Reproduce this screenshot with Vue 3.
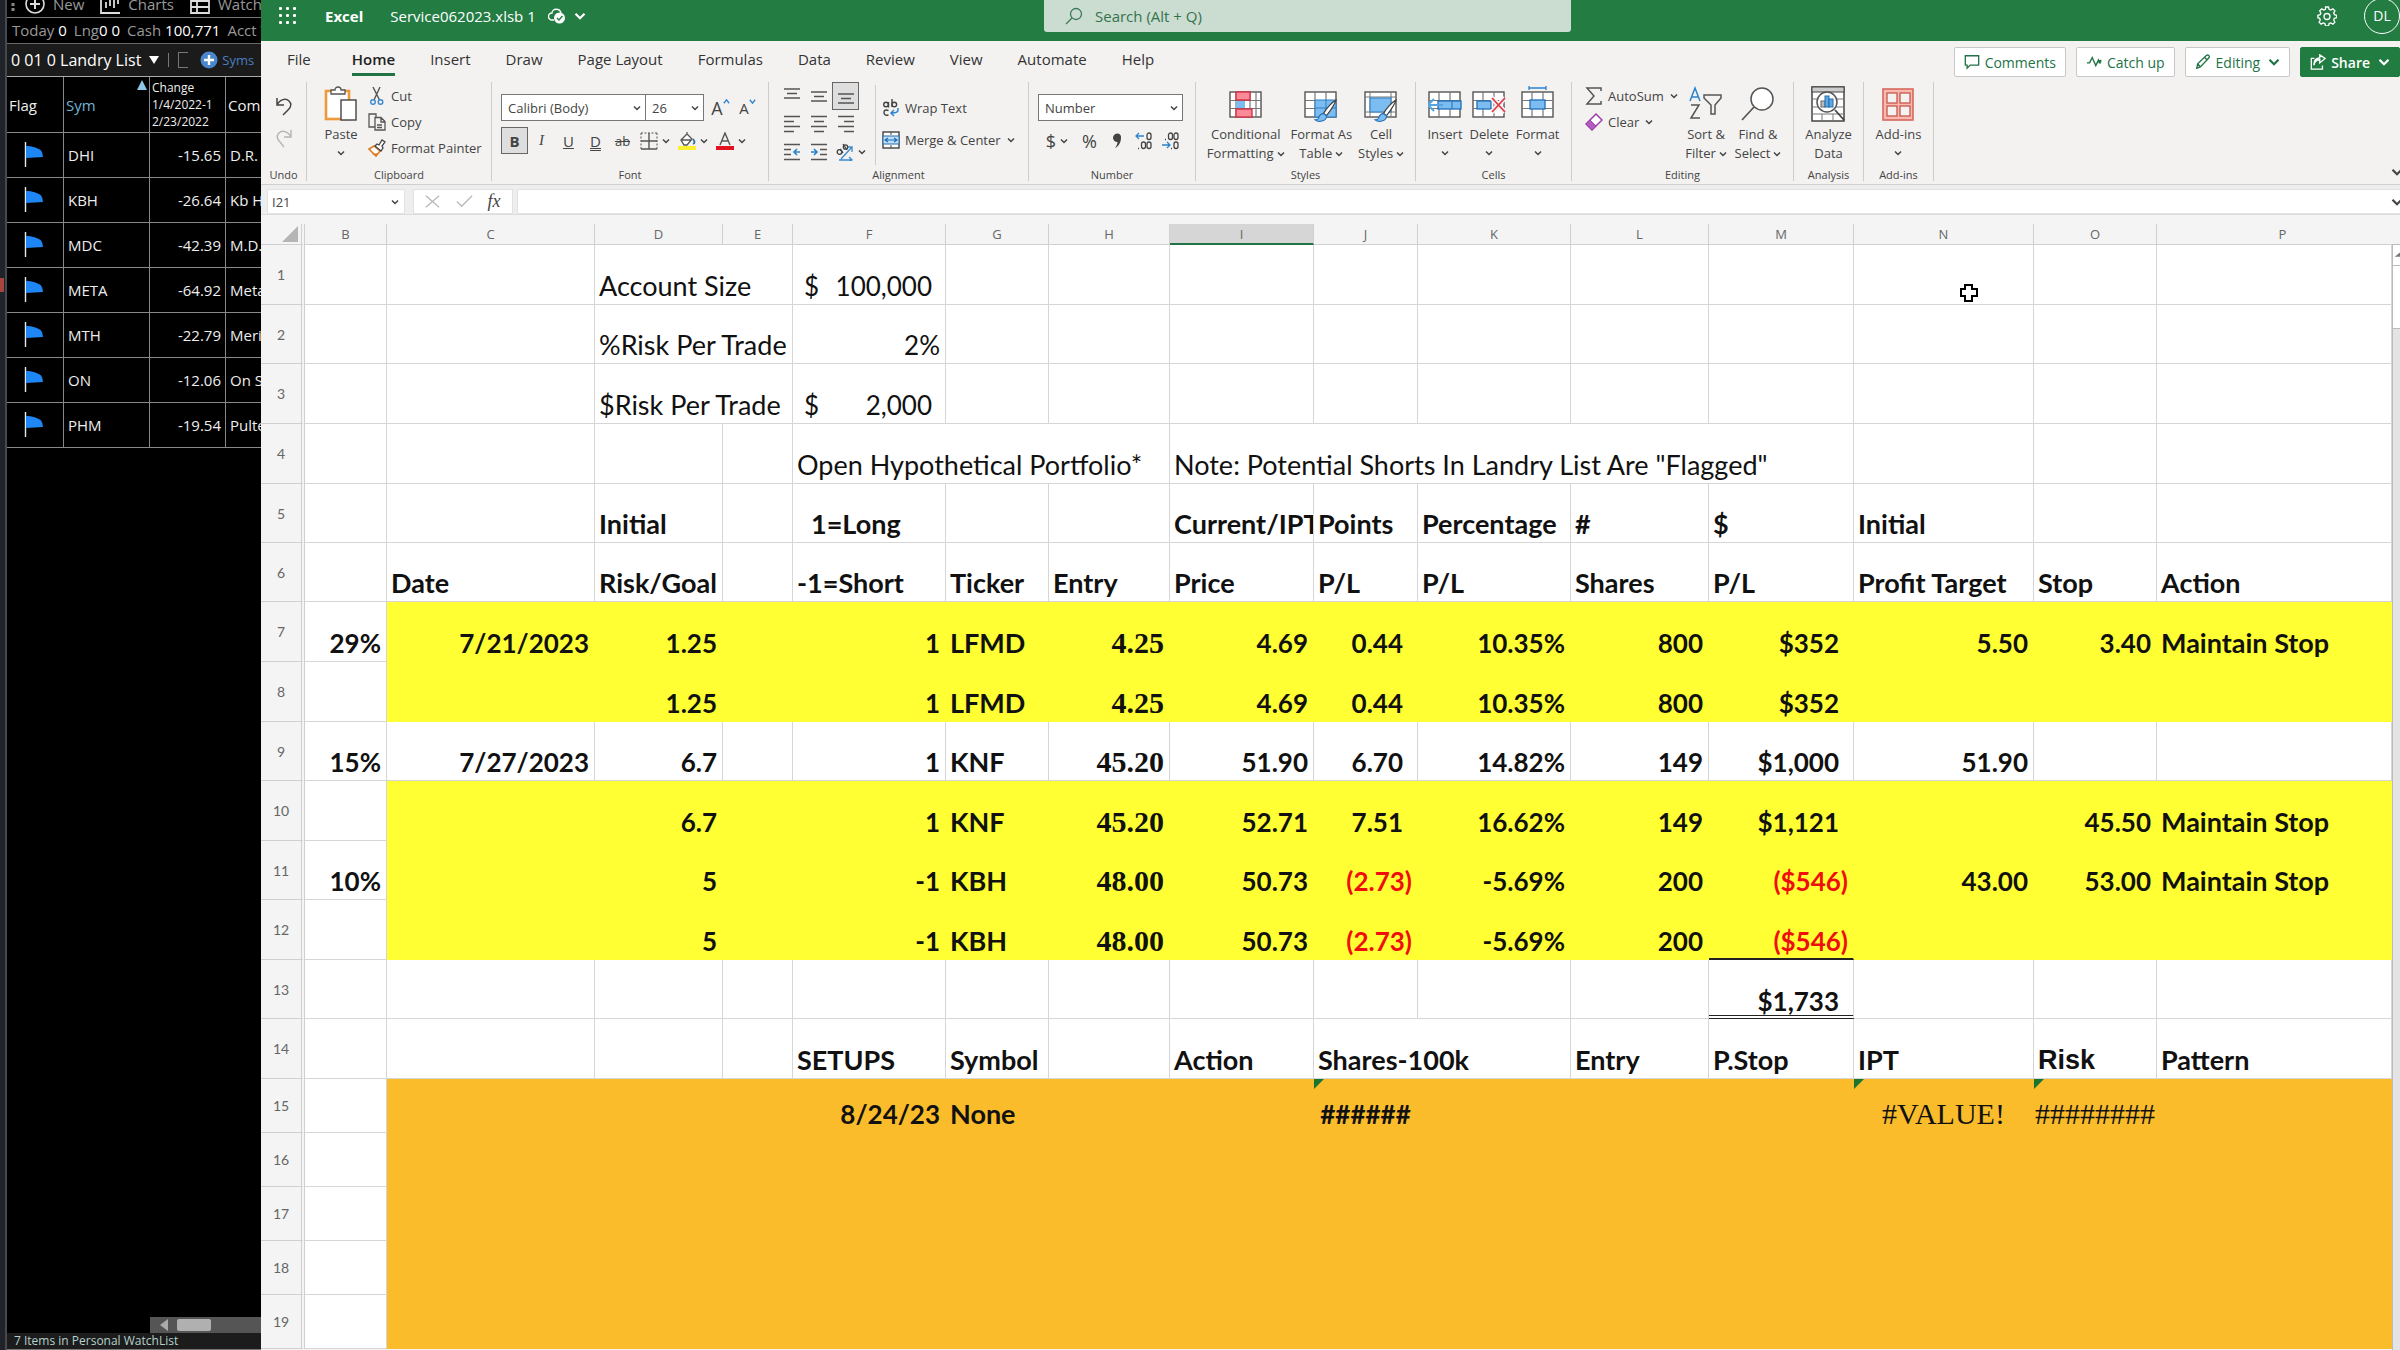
<template>
  <div class="screen">
    <!-- Icon definitions -->
    <svg class="defs" aria-hidden="true">
      <symbol id="chev" viewBox="0 0 8 8"><path d="M1 2.500 4 5.500 7 2.500" fill="none" stroke="currentColor" stroke-width="1.500" /></symbol>
      <symbol id="sheet-grid" viewBox="0 0 34 30">
        <rect x="1" y="2" width="31" height="25" fill="#fff" stroke="#555" stroke-width="1.400" />
        <path d="M1 10.500H32M1 18.500H32M11 2V27M22 2V27" stroke="#777" stroke-width="1.200" />
      </symbol>
      <symbol id="brush" viewBox="0 0 24 24">
        <path d="M22 2C18 4 12 11 10 15l3 2C16 13 21 6 22 2Z" fill="#fff" stroke="#444" stroke-width="1.200" />
        <path d="M10 15c-3 0-4 2-4.500 4-.5 1.500-2 2-3.500 2 3 2.500 11 2 11-4Z" fill="#7dbcf0" stroke="#1e6fb8" />
      </symbol>
      <symbol id="flag" viewBox="0 0 20 28">
        <path d="M1.500 1V26" stroke="#e8e8e8" stroke-width="1.400" />
        <path d="M2 5C8 5 14 7 17 9.500Q19 12 19 16L2 17Z" fill="#1e86f5" />
      </symbol>
    </svg>

    <div class="edge"><i></i></div>

    <!-- Watch list panel -->
    <aside class="watch">
      <div class="watch-tools">
        <svg class="w-dots" viewBox="0 0 4 16"><path d="M2 1v3M2 7v3M2 12v3" stroke="#888" stroke-width="3" /></svg>
        <svg class="w-icon" viewBox="0 0 20 20"><circle cx="10" cy="10" r="9" fill="none" stroke="#ddd" stroke-width="1.600" /><path d="M10 5V15M5 10H15" stroke="#ddd" stroke-width="2" /></svg>
        <a href="#">New</a><b></b>
        <svg class="w-icon" viewBox="0 0 20 20"><path d="M1 1V19H20M6 14V8M10 12V5M14 14V6M18 10V3" fill="none" stroke="#ddd" stroke-width="1.800" /></svg>
        <a href="#">Charts</a><b></b>
        <svg class="w-icon" viewBox="0 0 20 20"><path d="M1 1H19V19H1ZM1 7H19M1 13H19M7 7V19" fill="none" stroke="#ddd" stroke-width="1.800" /></svg>
        <a href="#">Watch</a>
      </div>
      <div class="watch-stats">
        <span>Today <em>0</em></span><span>Lng<em>0 0</em></span><span>Cash <em>100,771</em></span><span>Acct V</span>
      </div>
      <div class="watch-title">
        <button class="list-pick">0 01 0 Landry List<svg viewBox="0 0 10 8"><path d="M0 0H10L5 8Z" fill="#fff" /></svg></button>
        <i class="bar"></i><i class="bracket"></i>
        <button class="syms"><svg viewBox="0 0 18 18"><circle cx="9" cy="9" r="8.500" fill="#4a86cc" /><path d="M9 4V14M4 9H14" stroke="#fff" stroke-width="2.400" /></svg>Syms</button>
      </div>
      <table class="watch-table">
        <colgroup><col class="w-flag" /><col class="w-sym" /><col class="w-change" /><col /></colgroup>
        <thead>
          <tr>
            <th>Flag</th>
            <th class="sorted">Sym<svg viewBox="0 0 10 10"><path d="M5 0 10 10H0Z" fill="#8ec8e6" /></svg></th>
            <th class="change">Change<br />1/4/2022-1<br />2/23/2022</th>
            <th>Comp</th>
          </tr>
        </thead>
        <tbody>
          <tr v-for="item in watchItems" :key="item.sym">
            <td class="flag"><svg><use href="#flag" /></svg></td>
            <td class="sym">{{ item.sym }}</td>
            <td class="num">{{ item.change }}</td>
            <td class="company">{{ item.company }}</td>
          </tr>
        </tbody>
      </table>
      <div class="watch-scroll">
        <svg viewBox="0 0 8 12"><path d="M8 0V12L0 6Z" fill="#aaa" /></svg><i></i>
      </div>
      <div class="watch-status">7 Items in Personal WatchList</div>
    </aside>

    <!-- Excel window -->
    <main class="excel">
      <header class="topbar">
        <svg class="waffle" viewBox="0 0 18 18"><g fill="#fff"><rect v-for="n in 9" :key="n" :x="((n - 1) % 3) * 7" :y="Math.floor((n - 1) / 3) * 7" width="3" height="3" rx="1" /></g></svg>
        <strong>Excel</strong>
        <span class="doc">Service062023.xlsb 1</span>
        <svg class="cloud" viewBox="0 0 18 18"><path d="M6 13H4A3.500 3.500 0 0 1 4 6C4 1 12 1 13 6" fill="none" stroke="#fff" stroke-width="1.300" /><circle cx="11.500" cy="11" r="5.500" fill="#fff" /><path d="M9 11l2 2 3.500-4" fill="none" stroke="#237d43" stroke-width="1.400" /></svg>
        <svg class="chev-l"><use href="#chev" /></svg>
        <label class="search">
          <svg viewBox="0 0 18 18"><circle cx="11" cy="7" r="5.500" fill="none" stroke="#3c7a55" stroke-width="1.300" /><path d="M7 11 1 17" stroke="#3c7a55" stroke-width="1.300" /></svg>
          <input type="text" placeholder="Search (Alt + Q)" aria-label="Search" />
        </label>
        <button class="gear" aria-label="Settings">
          <svg viewBox="0 0 20 20" fill="none" stroke="#fff"><path d="M8.500 1h3l.6 2.300 1.700.8 2.100-1.200 2 2-1.200 2.200.7 1.600 2.300.6v2.400l-2.300.6-.7 1.700 1.200 2.100-2 2-2.100-1.200-1.700.7-.6 2.400h-3l-.6-2.400-1.700-.7-2.100 1.200-2-2 1.200-2.100-.7-1.700L.9 11.700V9.300l2.300-.6.7-1.600-1.200-2.200 2-2 2.100 1.200 1.700-.8Z" stroke-width="1.300" /><circle cx="10" cy="10.500" r="3" stroke-width="1.300" /></svg>
        </button>
        <button class="avatar">DL</button>
      </header>

      <nav class="tabs">
        <a v-for="tab in tabs" :key="tab" href="#" :class="{ active: tab === 'Home', file: tab === 'File' }">{{ tab }}</a>
        <div class="actions">
          <button><svg viewBox="0 0 18 18"><path d="M1.500 2H16.500V12.500H7L3.500 16V12.500H1.500Z" fill="none" stroke="currentColor" stroke-width="1.500" /></svg>Comments</button>
          <button><svg viewBox="0 0 18 18"><path d="M1 10H4L7 4l4 9 3-6 1 3h2" fill="none" stroke="currentColor" stroke-width="1.600" /><circle cx="16" cy="8" r="1.500" fill="currentColor" /></svg>Catch up</button>
          <button><svg viewBox="0 0 18 18"><path d="M2 16l1-5L13 1.500q2-1 3 1 .5 1-.5 2L6 14.500ZM11 4l3 3M3 11l3 3.500" fill="none" stroke="currentColor" stroke-width="1.500" /></svg>Editing<svg class="chev-l"><use href="#chev" /></svg></button>
          <button class="share"><svg viewBox="0 0 18 18"><path d="M5 5H1.500V17H14V13M4.500 12.500C5 8 7 6.500 11 6.500V10l6-5-6-4V4.500C7 4.500 4 7 4.500 12.500Z" fill="none" stroke="currentColor" stroke-width="1.500" /></svg>Share<svg class="chev-l"><use href="#chev" /></svg></button>
        </div>
      </nav>

      <div class="ribbon">
        <section class="group g-undo">
          <div class="body undo">
            <button aria-label="Undo"><svg viewBox="0 0 18 20"><path d="M2 2V9H9M2 9C5 3 11 2 14 5c3 3 2 6-1 9L8 19" fill="none" stroke="#444" stroke-width="1.500" /></svg></button>
            <button aria-label="Redo"><svg viewBox="0 0 18 20"><path d="M16 2V9H9M16 9C13 3 7 2 4 5c-3 3-2 6 1 9l4 5" fill="none" stroke="#b5b5b5" stroke-width="1.400" /></svg></button>
          </div>
          <h2>Undo</h2>
        </section>

        <section class="group g-clip">
          <div class="body">
            <button class="big paste">
              <svg viewBox="0 0 34 36"><rect x="2" y="5" width="23" height="28" fill="#fff" stroke="#ec9a3c" stroke-width="2.600" /><path d="M7 8V4h4c0-4 6-4 6 0h4v4Z" fill="#fff" stroke="#555" stroke-width="1.300" /><rect x="17" y="14" width="15" height="20" fill="#fff" stroke="#444" stroke-width="1.400" /></svg>
              <span>Paste</span><svg class="chev"><use href="#chev" /></svg>
            </button>
            <div class="stack">
              <button class="small"><svg viewBox="0 0 18 18"><path d="M5 0 11.500 13M12 0 6 13" stroke="#555" stroke-width="1.400" /><g fill="none" stroke="#3a8ad0" stroke-width="1.400"><circle cx="5" cy="15" r="2.300" /><circle cx="12.500" cy="15" r="2.300" /></g></svg>Cut</button>
              <button class="small"><svg viewBox="0 0 18 18"><path d="M7 14H1V1H8V4M7 4.500h6l4 4V17H7ZM13 5V9h4M9 12h5M9 14.500h5" fill="none" stroke="#555" stroke-width="1.300" /></svg>Copy</button>
              <button class="small"><svg viewBox="0 0 18 18"><path d="M1 10 6 7l6 5-4 5Z" fill="#fff" stroke="#e07b28" stroke-width="1.600" /><path d="M4 15l4 2 2-3Z" fill="#e07b28" /><path d="M7 7l2-2 2 1 3-5 3 2-3 4 1 2-2 3Z" fill="#fff" stroke="#444" stroke-width="1.300" /></svg>Format Painter</button>
            </div>
          </div>
          <h2>Clipboard</h2>
        </section>

        <section class="group g-font">
          <div class="body rows">
            <div class="line">
              <div class="combo family"><select aria-label="Font"><option>Calibri (Body)</option></select><svg class="chev"><use href="#chev" /></svg></div>
              <div class="combo size"><select aria-label="Font size"><option>26</option></select><svg class="chev"><use href="#chev" /></svg></div>
              <button class="glyph grow">A<svg viewBox="0 0 8 8"><path d="M1 6 4 2 7 6" fill="none" stroke="#2b84cf" stroke-width="1.500" /></svg></button>
              <button class="glyph grow less">A<svg viewBox="0 0 8 8"><path d="M1 2 4 6 7 2" fill="none" stroke="#2b84cf" stroke-width="1.500" /></svg></button>
            </div>
            <div class="line">
              <button class="glyph on"><b>B</b></button>
              <button class="glyph"><i class="serif">I</i></button>
              <button class="glyph"><u>U</u></button>
              <button class="glyph dbl"><u>D</u></button>
              <button class="glyph strike"><s>ab</s></button>
              <button class="drop" aria-label="Borders"><svg viewBox="0 0 18 18"><path d="M1 1H17M1 1V17M17 1V17" stroke="#555" stroke-dasharray="2 1.500" /><path d="M1 17H17M9 1V17M1 9H17" stroke="#555" stroke-width="1.400" /></svg><svg class="chev"><use href="#chev" /></svg></button>
              <button class="drop" aria-label="Fill colour"><svg viewBox="0 0 18 18"><path d="M3 8 9 2l5 5-5 6H6ZM9 2V0M3 8h10" fill="#fff" stroke="#555" stroke-width="1.300" /><path d="M15 7q3 4 0 5" stroke="#2b6cb0" stroke-width="1.800" fill="none" /><rect y="14" width="18" height="4" fill="#fcf032" /></svg><svg class="chev"><use href="#chev" /></svg></button>
              <button class="drop" aria-label="Font colour"><svg viewBox="0 0 18 18"><path d="M4 13 9 1l5 12M6 9h6" fill="none" stroke="#555" stroke-width="1.400" /><rect y="14" width="18" height="4" fill="#e2131f" /></svg><svg class="chev"><use href="#chev" /></svg></button>
            </div>
          </div>
          <h2>Font</h2>
        </section>

        <section class="group g-align">
          <div class="body">
            <div class="align-grid">
              <button v-for="icon in alignIcons" :key="icon.name" :aria-label="icon.name" :class="{ on: icon.on }">
                <svg viewBox="0 0 18 18"><path :d="icon.d" stroke="#555" stroke-width="1.500" /><path v-if="icon.arrow" :d="icon.arrow" fill="none" stroke="#2b84cf" stroke-width="1.700" /></svg>
              </button>
              <button class="orient" aria-label="Orientation"><svg viewBox="0 0 18 18"><path d="M3 17H16M5 16 16 4M11 4h5v5M13 14l3 3-3 2" fill="none" stroke="#3a8ad0" stroke-width="1.300" /><g fill="none" stroke="#444" stroke-width="1.300"><circle cx="3.500" cy="9" r="2.300" /><path d="M4 6l3 4M7 1l4 6" /><circle cx="9.500" cy="4" r="2.200" /></g></svg><svg class="chev"><use href="#chev" /></svg></button>
            </div>
            <div class="stack wide">
              <button class="small"><svg viewBox="0 0 18 18"><g fill="none" stroke="#444" stroke-width="1.400"><circle cx="4" cy="5.500" r="2.300" /><path d="M6.500 3V8.500M10 0V8" /><circle cx="12.300" cy="5.500" r="2.300" /><path d="M6.500 11.500Q2 10 2 13.500T6.500 16" /></g><path d="M16 9v2q0 3-6 3M12 11l-3 3 3 3" fill="none" stroke="#2b84cf" stroke-width="1.500" /></svg>Wrap Text</button>
              <button class="small"><svg viewBox="0 0 18 18"><rect x="1" y="1" width="16" height="16" fill="#fff" stroke="#444" stroke-width="1.400" /><rect x="1" y="5" width="16" height="8" fill="#bfe0f8" stroke="#2b6ca8" /><path d="M3 9H15M6 7 3 9l3 2M12 7l3 2-3 2" fill="none" stroke="#1f6fb5" stroke-width="1.200" /><path d="M9 1V4M9 14V17" stroke="#444" /></svg>Merge &amp; Center<svg class="chev"><use href="#chev" /></svg></button>
            </div>
          </div>
          <h2>Alignment</h2>
        </section>

        <section class="group g-number">
          <div class="body rows">
            <div class="line">
              <div class="combo format"><select aria-label="Number format"><option>Number</option></select><svg class="chev"><use href="#chev" /></svg></div>
            </div>
            <div class="line">
              <button class="drop money">$<svg class="chev"><use href="#chev" /></svg></button>
              <button class="glyph money">%</button>
              <button class="glyph comma" aria-label="Comma style"><svg viewBox="0 0 18 18"><path d="M9 1.500a3.500 3.500 0 0 1 4 4C13 10 11 14 7 16c1.500-2 2.500-4 2.500-6A4 4 0 0 1 9 1.500Z" fill="#444" /></svg></button>
              <button class="glyph" aria-label="Increase decimal"><svg viewBox="0 0 18 18" fill="none" stroke="#444" stroke-width="1.300"><rect x="12" y="1" width="4" height="6.500" rx="2" /><rect x="6.500" y="10" width="4" height="6.500" rx="2" /><rect x="12" y="10" width="4" height="6.500" rx="2" /><path d="M3 16.500h1" /><path d="M9 4H1M4 1 1 4l3 3" stroke="#2b84cf" /></svg></button>
              <button class="glyph" aria-label="Decrease decimal"><svg viewBox="0 0 18 18" fill="none" stroke="#444" stroke-width="1.300"><rect x="6.500" y="1" width="4" height="6.500" rx="2" /><rect x="12" y="1" width="4" height="6.500" rx="2" /><rect x="12" y="10" width="4" height="6.500" rx="2" /><path d="M3 7.500h1M9 16.500h1" /><path d="M0 13H8M5 10l3 3-3 3" stroke="#2b84cf" /></svg></button>
            </div>
          </div>
          <h2>Number</h2>
        </section>

        <section class="group g-styles">
          <div class="body">
            <button class="big">
              <svg viewBox="0 0 34 36"><rect x="1" y="6" width="31" height="25" fill="#fff" stroke="#555" stroke-width="1.400" /><path d="M1 14.500H32M1 22.500H32M7 6V31M21 6V31M27 6V31" stroke="#777" stroke-width="1.200" /><g stroke="#d62a40" fill="#f98b98" stroke-width="1.300"><rect x="7" y="6" width="14" height="8" /><rect x="7" y="23" width="16" height="8" /></g><rect x="7" y="15" width="9" height="7" fill="#7dbcf0" /></svg>
              <span>Conditional<br />Formatting<svg class="chev"><use href="#chev" /></svg></span>
            </button>
            <button class="big">
              <svg viewBox="0 0 34 36"><use href="#sheet-grid" y="4" width="34" height="30" /><rect x="11" y="14" width="21" height="17" fill="#7dbcf0" stroke="#2b7cc4" /><path d="M11 22H32M22 14V31" stroke="#2b7cc4" /><use href="#brush" x="9" y="12" width="25" height="25" /></svg>
              <span>Format As<br />Table<svg class="chev"><use href="#chev" /></svg></span>
            </button>
            <button class="big">
              <svg viewBox="0 0 34 36"><rect x="1" y="6" width="31" height="25" fill="#fff" stroke="#555" stroke-width="1.400" /><path d="M1 11H32M1 26H32M6 6V31M27 6V31" stroke="#777" /><rect x="6" y="12" width="21" height="14" fill="#7dbcf0" stroke="#2b7cc4" /><use href="#brush" x="9" y="12" width="25" height="25" /></svg>
              <span>Cell<br />Styles<svg class="chev"><use href="#chev" /></svg></span>
            </button>
          </div>
          <h2>Styles</h2>
        </section>

        <section class="group g-cells">
          <div class="body">
            <button class="big">
              <svg viewBox="0 0 34 36"><use href="#sheet-grid" y="4" width="34" height="30" /><rect x="10" y="15" width="23" height="8" fill="#7dbcf0" stroke="#1e6fb8" stroke-width="1.300" /><path d="M24 15V23" stroke="#1e6fb8" /><path d="M15 19H0M6 13 0 19l6 6" fill="none" stroke="#56a5e2" stroke-width="2" /></svg>
              <span>Insert</span><svg class="chev"><use href="#chev" /></svg>
            </button>
            <button class="big">
              <svg viewBox="0 0 34 36"><use href="#sheet-grid" y="4" width="34" height="30" /><rect x="5" y="15" width="14" height="8" fill="#7dbcf0" stroke="#1e6fb8" stroke-width="1.300" /><path d="M20 12 33 26M33 12 20 26" stroke="#f3f2f1" stroke-width="5" /><path d="M20 12 33 26M33 12 20 26" stroke="#e03a4c" stroke-width="1.800" /></svg>
              <span>Delete</span><svg class="chev"><use href="#chev" /></svg>
            </button>
            <button class="big">
              <svg viewBox="0 0 34 36"><use href="#sheet-grid" y="4" width="34" height="30" /><rect x="9" y="14" width="15" height="9" fill="#7dbcf0" stroke="#1e6fb8" stroke-width="1.300" /><path d="M8 2H25M8 0V4M25 0V4" stroke="#2b84cf" stroke-width="1.300" /></svg>
              <span>Format</span><svg class="chev"><use href="#chev" /></svg>
            </button>
          </div>
          <h2>Cells</h2>
        </section>

        <section class="group g-edit">
          <div class="body">
            <div class="stack edit">
              <button class="small"><svg viewBox="0 0 18 18"><path d="M16 4V1H2l7 8-7 8H16V14" fill="none" stroke="#555" stroke-width="1.500" /></svg>AutoSum<svg class="chev"><use href="#chev" /></svg></button>
              <button class="small"><svg viewBox="0 0 18 18"><path d="M11 1 17 7 7 17 1 11Z" fill="#fff" stroke="#9b3fa8" stroke-width="1.500" /><path d="M5 7 11 13 7 17 1 11Z" fill="#b45cc0" stroke="#9b3fa8" /></svg>Clear<svg class="chev"><use href="#chev" /></svg></button>
            </div>
            <button class="big narrow">
              <svg viewBox="0 0 34 36"><path d="M1 15 6 2l5 13M3 11h6" fill="none" stroke="#2b84cf" stroke-width="1.500" /><path d="M2 19h8L2 32h9M15 9H32V12L26 19V28H22V19L15 12Z" fill="none" stroke="#555" stroke-width="1.500" /></svg>
              <span>Sort &amp;<br />Filter<svg class="chev"><use href="#chev" /></svg></span>
            </button>
            <button class="big narrow">
              <svg viewBox="0 0 34 36"><circle cx="21" cy="13" r="11" fill="#fff" stroke="#555" stroke-width="1.500" /><path d="M13 21 1 34" stroke="#555" stroke-width="1.700" /></svg>
              <span>Find &amp;<br />Select<svg class="chev"><use href="#chev" /></svg></span>
            </button>
          </div>
          <h2>Editing</h2>
        </section>

        <section class="group g-one">
          <div class="body">
            <button class="big">
              <svg viewBox="0 0 34 36"><rect x="1" y="1" width="32" height="34" fill="#fff" stroke="#444" stroke-width="1.500" /><rect x="1" y="1" width="32" height="5" fill="#ccc" stroke="#444" /><path d="M1 13H33M1 21H33M1 28H33M11 28V35M22 28V35" stroke="#777" /><circle cx="16" cy="16" r="10" fill="#fff" stroke="#555" stroke-width="1.500" /><path d="M24 24 33 34" stroke="#444" stroke-width="1.800" /><rect x="10" y="15" width="4" height="6" fill="#bbb" stroke="#666" /><rect x="14" y="10" width="4" height="11" fill="#5aa9e6" stroke="#2b6ca8" /><rect x="18" y="13" width="4" height="8" fill="#5aa9e6" stroke="#2b6ca8" /></svg>
              <span>Analyze<br />Data</span>
            </button>
          </div>
          <h2>Analysis</h2>
        </section>

        <section class="group g-one">
          <div class="body">
            <button class="big">
              <svg viewBox="0 0 34 36"><rect x="2" y="3" width="30" height="31" fill="#f7b9b0" stroke="#d8685c" stroke-width="1.600" /><g fill="#f3f2f1" stroke="#c9574b" stroke-width="1.300"><rect x="6" y="7" width="10" height="10" /><rect x="19" y="7" width="10" height="10" /><rect x="6" y="20" width="10" height="10" /><rect x="19" y="20" width="10" height="10" /></g></svg>
              <span>Add-ins</span><svg class="chev"><use href="#chev" /></svg>
            </button>
          </div>
          <h2>Add-ins</h2>
        </section>
        <button class="collapse" aria-label="Ribbon options"><svg class="chev-l"><use href="#chev" /></svg></button>
      </div>

      <div class="formula">
        <div class="namebox"><input type="text" value="I21" aria-label="Name box" /><svg class="chev"><use href="#chev" /></svg></div>
        <div class="fx">
          <svg viewBox="0 0 18 18"><path d="M2 3 16 15M16 3 2 15" stroke="#b9b9b9" stroke-width="1.400" /></svg>
          <svg viewBox="0 0 18 18"><path d="M1 9 6 14 17 3" fill="none" stroke="#b9b9b9" stroke-width="1.400" /></svg>
          <i>fx</i>
        </div>
        <div class="entry"><input type="text" aria-label="Formula" /><svg class="chev-l"><use href="#chev" /></svg></div>
      </div>

      <div class="sheet">
        <table class="grid">
          <colgroup>
            <col class="c-head" />
            <col v-for="col in columns" :key="col" :class="'c-' + col" />
          </colgroup>
          <thead>
            <tr>
              <th class="corner"><svg viewBox="0 0 16 16"><path d="M16 0V16H0Z" fill="#b5b5b5" /></svg></th>
              <th v-for="col in columns" :key="col" :class="{ selected: col === 'I' }">{{ col }}</th>
            </tr>
          </thead>
          <tbody>
            <tr v-for="row in rows" :key="row.n" :class="[row.fill, rowSize(row.n)]">
              <th>{{ row.n }}</th>
              <td v-for="cell in layOut(row)" :key="cell.col" :colspan="cell.span" :class="[cell.cls, { gutter: cell.col === 'B' }]">
                <div v-if="cell.money" class="accounting"><span>$</span><span>{{ cell.text }}</span></div>
                <template v-else>{{ cell.text }}</template>
              </td>
            </tr>
          </tbody>
        </table>
        <div class="vscroll">
          <button aria-label="Scroll up"><svg viewBox="0 0 8 8"><path d="M8 1V6H2Z" fill="#777" /></svg></button>
          <i></i>
        </div>
      </div>
    </main>

    <svg class="pointer" viewBox="0 0 20 20"><path d="M6 2H13V6H18V13H13V18H6V13H2V6H6Z" fill="#fff" stroke="#000" stroke-width="2" /></svg>
  </div>
</template>

<script setup>
const watchItems = [
  { sym: 'DHI', change: '-15.65', company: 'D.R.' },
  { sym: 'KBH', change: '-26.64', company: 'Kb H' },
  { sym: 'MDC', change: '-42.39', company: 'M.D.' },
  { sym: 'META', change: '-64.92', company: 'Meta' },
  { sym: 'MTH', change: '-22.79', company: 'Meri' },
  { sym: 'ON', change: '-12.06', company: 'On S' },
  { sym: 'PHM', change: '-19.54', company: 'Pulte' }
];

const tabs = ['File', 'Home', 'Insert', 'Draw', 'Page Layout', 'Formulas', 'Data', 'Review', 'View', 'Automate', 'Help'];

const alignIcons = [
  { name: 'Top align', d: 'M1 2H17M4 6.500H14M1 11H17' },
  { name: 'Middle align', d: 'M1 5H17M4 9.500H14M1 14H17' },
  { name: 'Bottom align', d: 'M1 7H17M4 11.500H14M1 16H17', on: true },
  { name: 'Align left', d: 'M1 1.500H17M1 6.500H11M1 11.500H17M1 16.500H11' },
  { name: 'Center', d: 'M1 1.500H17M4 6.500H14M1 11.500H17M4 16.500H14' },
  { name: 'Align right', d: 'M1 1.500H17M7 6.500H17M1 11.500H17M7 16.500H17' },
  { name: 'Decrease indent', d: 'M1 1.500H17M1 6.500H8M1 11.500H8M1 16.500H17', arrow: 'M17 9H11M14 6l-3 3 3 3' },
  { name: 'Increase indent', d: 'M1 1.500H17M10 6.500H17M10 11.500H17M1 16.500H17', arrow: 'M1 9H7M4 6l3 3-3 3' }
];

const columns = 'BCDEFGHIJKLMNOP'.split('');

const left = (text, span = 1) => ({ text, span, cls: 'left' });
const plain = (text, span = 1) => ({ text, span, cls: 'left plain' });
const right = (text) => ({ text, cls: 'right' });
const inset = (text) => ({ text, cls: 'right inset' });
const red = (text) => ({ text, cls: 'right red' });
const serif = (text) => ({ text, cls: 'right serif' });

const rows = [
  { n: 1, cells: { D: plain('Account Size', 2), F: { text: '100,000', money: true, cls: 'plain right' } } },
  { n: 2, cells: { D: plain('%Risk Per Trade', 2), F: { text: '2%', cls: 'plain right' } } },
  { n: 3, cells: { D: plain('$Risk Per Trade', 2), F: { text: '2,000', money: true, cls: 'plain right' } } },
  { n: 4, cells: { F: plain('Open Hypothetical Portfolio*', 3), I: plain('Note: Potential Shorts In Landry List Are "Flagged"', 5) } },
  { n: 5, cells: { D: left('Initial'), F: { text: '1=Long', cls: 'left indent' }, I: left('Current/IPT'), J: left('Points'), K: left('Percentage'), L: left('#'), M: left('$'), N: left('Initial') } },
  { n: 6, cells: { C: left('Date'), D: left('Risk/Goal'), F: left('-1=Short'), G: left('Ticker'), H: left('Entry'), I: left('Price'), J: left('P/L'), K: left('P/L'), L: left('Shares'), M: left('P/L'), N: left('Profit Target'), O: left('Stop'), P: left('Action') } },
  { n: 7, fill: 'yellow', cells: { B: right('29%'), C: right('7/21/2023'), D: right('1.25'), F: right('1'), G: left('LFMD'), H: serif('4.25'), I: right('4.69'), J: inset('0.44'), K: right('10.35%'), L: right('800'), M: inset('$352'), N: right('5.50'), O: right('3.40'), P: left('Maintain Stop') } },
  { n: 8, fill: 'yellow', cells: { D: right('1.25'), F: right('1'), G: left('LFMD'), H: serif('4.25'), I: right('4.69'), J: inset('0.44'), K: right('10.35%'), L: right('800'), M: inset('$352') } },
  { n: 9, cells: { B: right('15%'), C: right('7/27/2023'), D: right('6.7'), F: right('1'), G: left('KNF'), H: serif('45.20'), I: right('51.90'), J: inset('6.70'), K: right('14.82%'), L: right('149'), M: inset('$1,000'), N: right('51.90') } },
  { n: 10, fill: 'yellow', cells: { D: right('6.7'), F: right('1'), G: left('KNF'), H: serif('45.20'), I: right('52.71'), J: inset('7.51'), K: right('16.62%'), L: right('149'), M: inset('$1,121'), O: right('45.50'), P: left('Maintain Stop') } },
  { n: 11, fill: 'yellow', cells: { B: right('10%'), D: right('5'), F: right('-1'), G: left('KBH'), H: serif('48.00'), I: right('50.73'), J: red('(2.73)'), K: right('-5.69%'), L: right('200'), M: red('($546)'), N: right('43.00'), O: right('53.00'), P: left('Maintain Stop') } },
  { n: 12, fill: 'yellow', cells: { D: right('5'), F: right('-1'), G: left('KBH'), H: serif('48.00'), I: right('50.73'), J: red('(2.73)'), K: right('-5.69%'), L: right('200'), M: { text: '($546)', cls: 'right red ruled' } } },
  { n: 13, cells: { M: { text: '$1,733', cls: 'right inset total' } } },
  { n: 14, cells: { F: left('SETUPS'), G: left('Symbol'), I: left('Action'), J: left('Shares-100k', 2), L: left('Entry'), M: left('P.Stop'), N: left('IPT'), O: { text: 'Risk', cls: 'left arial' }, P: left('Pattern') } },
  { n: 15, fill: 'orange', cells: { F: right('8/24/23'), G: left('None'), J: { text: '######', cls: 'center error' }, N: { text: '#VALUE!', cls: 'center error serif thin' }, O: { text: '########', cls: 'center error serif thin' } } },
  { n: 16, fill: 'orange', cells: {} },
  { n: 17, fill: 'orange', cells: {} },
  { n: 18, fill: 'orange', cells: {} },
  { n: 19, fill: 'orange', cells: {} }
];

const rowSize = (n) => {
  if (n > 14) return 'short';
  return [2, 5, 6, 9, 11, 13].includes(n) ? 'medium' : 'tall';
};

// Turn the sparse cells of a row into the list of cells, skipping the spanned ones
const layOut = (row) => {
  const out = [];
  let i = 0;
  while (i < columns.length) {
    const cell = { col: columns[i], text: '', span: 1, ...row.cells[columns[i]] };
    out.push(cell);
    i += cell.span;
  }
  return out;
};
</script>

<style>
body {
  margin: 0;
  background: #000;
}
</style>

<style scoped>
.screen {
  display: flex;
  position: relative;
  height: 100vh;
  overflow: hidden;
  font-family: "Open Sans", "Noto Sans", sans-serif;
  font-size: 13px;
  color: #444;
}

* {
  box-sizing: border-box;
}

button,
input,
select {
  font: inherit;
  color: inherit;
  background: none;
  border: 0;
  padding: 0;
  margin: 0;
}

button {
  display: flex;
  align-items: center;
  justify-content: center;
  white-space: nowrap;
}

a {
  color: inherit;
  text-decoration: none;
}

svg {
  flex: none;
}

.defs {
  position: absolute;
  width: 0;
  height: 0;
}

.chev {
  width: 8px;
  height: 8px;
}

.chev-l {
  width: 12px;
  height: 12px;
}

/* Left strip */
.edge {
  width: 7px;
  flex: none;
  background: #20232a;
  border-right: 2px solid #45484d;
  padding-top: 278px;
}

.edge i {
  display: block;
  width: 4px;
  height: 14px;
  background: #a8443f;
}

/* Watch list */
.watch {
  width: 254px;
  flex: none;
  display: flex;
  flex-direction: column;
  overflow: hidden;
  background: #000;
  color: #eee;
  font-size: 15px;
  white-space: nowrap;
}

.watch-tools {
  display: flex;
  align-items: center;
  gap: 8px;
  height: 18px;
  padding: 0 0 9px 4px;
  border-bottom: 1px solid #777;
  color: #999;
}

.watch-tools b {
  width: 1px;
  height: 16px;
  background: #666;
}

.w-dots {
  width: 4px;
  height: 16px;
  margin-right: 2px;
}

.w-icon {
  width: 20px;
  height: 20px;
}

.watch-stats {
  display: flex;
  align-items: center;
  gap: 7px;
  height: 26px;
  padding-left: 5px;
  padding-bottom: 2px;
  border-bottom: 1px solid #666;
  color: #999;
}

.watch-stats em {
  font-style: normal;
  color: #fff;
}

.watch-title {
  display: flex;
  align-items: center;
  height: 33px;
  padding-left: 4px;
  background: #1b1b1b;
  border-bottom: 1px solid #aaa;
  font-size: 16px;
}

.list-pick {
  color: #fff;
}

.list-pick svg {
  width: 10px;
  height: 8px;
  margin-left: 8px;
}

.bar {
  width: 1px;
  height: 14px;
  margin: 0 9px;
  background: #777;
}

.bracket {
  width: 10px;
  height: 16px;
  border: 1px solid #777;
  border-right: 0;
  margin-right: 12px;
}

.syms {
  gap: 4px;
  font-size: 13px;
  color: #4a7ec0;
}

.syms svg {
  width: 18px;
  height: 18px;
}

.watch-table {
  table-layout: fixed;
  width: 100%;
  border-spacing: 0;
}

.w-flag {
  width: 57px;
}

.w-sym {
  width: 86px;
}

.w-change {
  width: 76px;
}

.watch-table th,
.watch-table td {
  height: 45px;
  padding: 0 4px;
  border-right: 1px solid #888;
  border-bottom: 1px solid #888;
  text-align: left;
  font-weight: 400;
  overflow: hidden;
}

.watch-table th:last-child,
.watch-table td:last-child {
  border-right: 0;
  padding-right: 0;
}

.watch-table th {
  height: 56px;
  padding: 0 2px;
  position: relative;
}

.watch-table .change {
  font-size: 12px;
  line-height: 17px;
}

.watch-table .sorted {
  color: #6fb4d4;
}

.sorted svg {
  position: absolute;
  top: 3px;
  right: 2px;
  width: 10px;
  height: 10px;
}

.watch-table .flag {
  padding-left: 17px;
}

.flag svg {
  display: block;
  width: 20px;
  height: 28px;
}

.watch-table .num {
  text-align: right;
}

.watch-scroll {
  display: flex;
  align-items: center;
  gap: 9px;
  height: 16px;
  margin-top: auto;
  margin-left: 143px;
  padding-left: 10px;
  background: #555;
}

.watch-scroll svg {
  width: 8px;
  height: 12px;
}

.watch-scroll i {
  width: 34px;
  height: 12px;
  border-radius: 2px;
  background: #b0b0b0;
}

.watch-status {
  height: 17px;
  padding-left: 7px;
  background: #1c1c1c;
  border-bottom: 1px solid #777;
  font-size: 12px;
  line-height: 16px;
  color: #b4d0cc;
}

/* Excel */
.excel {
  flex: 1;
  min-width: 0;
  display: flex;
  flex-direction: column;
  background: #f3f2f1;
}

.topbar {
  display: flex;
  align-items: center;
  position: relative;
  height: 41px;
  flex: none;
  padding: 0 0 10px 18px;
  overflow: hidden;
  background: #237d43;
  color: #fff;
  font-size: 15px;
}

.waffle {
  width: 18px;
  height: 18px;
  margin-right: 28px;
}

.doc {
  margin: 0 12px 0 27px;
}

.cloud {
  width: 18px;
  height: 18px;
  margin-right: 8px;
}

.search {
  position: absolute;
  left: 783px;
  top: 0;
  display: flex;
  align-items: center;
  gap: 12px;
  width: 527px;
  height: 32px;
  padding-left: 21px;
  background: #cbdcd1;
  border-radius: 0 0 3px 3px;
}

.search svg {
  width: 18px;
  height: 18px;
}

.search input {
  flex: 1;
  font-size: 15px;
}

.search input::placeholder {
  color: #33744d;
  opacity: 1;
}

.gear {
  margin-left: auto;
}

.gear svg {
  width: 20px;
  height: 20px;
}

.avatar {
  flex: none;
  width: 36px;
  height: 36px;
  margin-left: 27px;
  border: 1px solid #fff;
  border-radius: 50%;
  font-size: 14px;
}

.tabs {
  display: flex;
  gap: 35px;
  height: 41px;
  flex: none;
  padding-left: 26px;
  font-size: 15px;
  color: #333;
}

.tabs a {
  height: 35px;
  line-height: 37px;
  white-space: nowrap;
}

.tabs .file {
  margin-right: 6px;
}

.tabs .active {
  border-bottom: 3px solid #217346;
  color: #222;
  font-weight: 600;
}

.actions {
  display: flex;
  gap: 10px;
  margin: 6px 0 0 auto;
}

.actions button {
  gap: 5px;
  height: 30px;
  padding: 0 9px;
  border: 1px solid #c8c8c8;
  border-radius: 2px;
  background: #fff;
  color: #217346;
  font-size: 14px;
}

.actions svg {
  width: 16px;
  height: 16px;
}

.actions .chev-l {
  width: 12px;
  height: 12px;
  margin-left: 3px;
}

.actions .share {
  border-color: #217c41;
  background: #217c41;
  color: #fff;
  font-weight: 600;
}

.ribbon {
  display: flex;
  height: 103px;
  flex: none;
  padding-bottom: 3px;
  border-bottom: 1px solid #cfcfcf;
}

.group {
  display: flex;
  flex-direction: column;
  flex: none;
  border-right: 1px solid #ccc;
}

.group h2 {
  margin: 0;
  font-size: 11px;
  font-weight: 400;
  line-height: 13px;
  text-align: center;
}

.body {
  display: flex;
  height: 86px;
}

.g-undo {
  width: 46px;
}

.g-clip {
  width: 185px;
}

.g-font {
  width: 277px;
}

.g-align {
  width: 260px;
}

.g-number {
  width: 167px;
}

.g-styles {
  width: 220px;
}

.g-styles .body {
  justify-content: center;
  gap: 6px;
}

.g-cells {
  width: 156px;
}

.g-cells .body {
  justify-content: center;
  gap: 7px;
}

.g-edit {
  width: 222px;
}

.g-one {
  width: 70px;
}

.g-one .body {
  justify-content: center;
}

.undo {
  flex-direction: column;
  align-items: center;
  gap: 12px;
  padding-top: 14px;
}

.undo svg {
  display: block;
  width: 18px;
  height: 20px;
}

.big {
  flex-direction: column;
  justify-content: flex-start;
  padding-top: 4px;
  line-height: 19px;
}

.big > svg:first-child {
  width: 34px;
  height: 36px;
}

.big span {
  margin-top: 3px;
}

.big span .chev {
  margin-left: 3px;
}

.big > .chev {
  margin-top: 5px;
}

.paste {
  margin-left: 17px;
}

.stack {
  display: flex;
  flex-direction: column;
  align-items: flex-start;
  gap: 6px;
  padding: 4px 0 0 10px;
}

.small {
  gap: 5px;
  height: 20px;
}

.small svg {
  width: 18px;
  height: 18px;
}

.small .chev {
  width: 8px;
  height: 8px;
  margin-left: 1px;
}

.wide {
  gap: 12px;
  padding: 16px 0 0 15px;
}

.edit {
  width: 108px;
  padding-left: 13px;
}

.narrow {
  width: 52px;
}

.rows {
  flex-direction: column;
  gap: 6px;
  padding: 12px 0 0 9px;
}

.line {
  display: flex;
  height: 27px;
}

.combo {
  position: relative;
  height: 27px;
  background: #fff;
  border: 1px solid #777;
}

.combo select {
  appearance: none;
  width: 100%;
  height: 100%;
  padding-left: 6px;
}

.combo .chev {
  position: absolute;
  right: 4px;
  top: 9px;
  pointer-events: none;
}

.family {
  width: 145px;
}

.size {
  width: 58px;
  border-left: 0;
  margin-right: 3px;
}

.format {
  width: 145px;
}

.glyph {
  width: 27px;
  height: 27px;
  font-size: 15px;
}

.glyph svg {
  width: 18px;
  height: 18px;
}

.glyph .serif {
  font-family: "Liberation Serif", serif;
}

.on {
  border: 1px solid #666;
  background: #dedede;
}

.grow {
  font-size: 18px;
  align-items: center;
}

.grow svg {
  width: 7px;
  height: 7px;
  margin-bottom: 12px;
}

.less {
  font-size: 15px;
}

.dbl u {
  text-decoration-style: double;
}

.strike {
  font-size: 13px;
}

.drop {
  gap: 4px;
  width: 38px;
  height: 27px;
}

.drop svg {
  width: 18px;
  height: 18px;
}

.drop .chev {
  width: 8px;
  height: 8px;
}

.money {
  font-size: 18px;
}

.align-grid {
  display: grid;
  grid-template-columns: repeat(3, 27px);
  grid-auto-rows: 28px;
  width: 108px;
  height: 84px;
  padding-left: 9px;
  margin-right: -10px;
}

.align-grid svg {
  width: 18px;
  height: 18px;
}

.wide {
  margin-left: 8px;
  padding-left: 6px;
  height: 80px;
  margin-top: 3px;
  padding-top: 13px;
  border-left: 1px solid #ccc;
}

.orient {
  justify-content: flex-start;
  gap: 4px;
  padding-left: 4px;
}

.orient .chev {
  width: 8px;
  height: 8px;
}

.collapse {
  align-self: flex-end;
  margin: 0 -3px 3px auto;
}

.formula {
  display: flex;
  height: 30px;
  flex: none;
  padding: 4px 0 0 6px;
  background: #eeeeee;
  border-bottom: 1px solid #ddd;
}

.namebox,
.fx,
.entry {
  display: flex;
  align-items: center;
  background: #fff;
  border: 1px solid #e2e2e2;
}

.namebox {
  width: 138px;
  margin-right: 8px;
  padding: 0 5px 0 4px;
}

.namebox input,
.entry input {
  flex: 1;
  min-width: 0;
  font-size: 13px;
}

.fx {
  justify-content: space-around;
  width: 100px;
  margin-right: 4px;
  padding: 0 4px 0 2px;
}

.fx svg {
  width: 17px;
  height: 17px;
}

.fx i {
  font: italic 18px "Liberation Serif", serif;
}

.entry {
  flex: 1;
  border-right: 0;
}

.entry .chev-l {
  margin-right: -3px;
}

.sheet {
  display: flex;
  flex: 1;
  padding-top: 9px;
  background: #f4f4f4;
}

.grid {
  flex: 1;
  width: 0;
  table-layout: fixed;
  border-spacing: 0;
  align-self: flex-start;
}

.c-head { width: 44px; }
.c-B { width: 82px; }
.c-C { width: 208px; }
.c-D { width: 128px; }
.c-E { width: 70px; }
.c-F { width: 153px; }
.c-G { width: 103px; }
.c-H { width: 121px; }
.c-I { width: 144px; }
.c-J { width: 104px; }
.c-K { width: 153px; }
.c-L { width: 138px; }
.c-M { width: 145px; }
.c-N { width: 180px; }
.c-O { width: 123px; }

.grid th {
  padding: 0;
  border-right: 1px solid #d0d0d0;
  border-bottom: 1px solid #d0d0d0;
  background: #f4f4f4;
  color: #666;
  font-weight: 400;
}

.grid thead th {
  height: 21px;
  line-height: 18px;
}

.grid thead th:last-child {
  padding-left: 16px;
  border-right: 0;
}

.grid thead .selected {
  background: #d6d6d6;
  border-bottom: 2px solid #217346;
}

.grid .corner,
.grid tbody th {
  border-right: 4px double #d0d0d0;
}

.corner svg {
  display: block;
  width: 16px;
  height: 16px;
  margin-left: auto;
  margin-right: 3px;
}

.grid tbody th {
  font-family: Lato, sans-serif;
  font-size: 14px;
}

.grid td {
  position: relative;
  padding: 0 5px 2px;
  background: #fff;
  border-right: 1px solid #d6d6d6;
  border-bottom: 1px solid #d6d6d6;
  color: #111;
  font: 700 26px/32px Lato, sans-serif;
  vertical-align: bottom;
  white-space: nowrap;
  overflow: hidden;
}

.grid td.left {
  font-size: 27px;
  padding-left: 4px;
  padding-right: 0;
}

.tall {
  height: 60px;
}

.medium {
  height: 59px;
}

.short {
  height: 54px;
}

.yellow td:not(.gutter) {
  background: #ffff33;
  border-color: #ffff33;
}

.orange td:not(.gutter) {
  background: #fabc2a;
  border-color: #fabc2a;
}

.grid .plain {
  font-weight: 400;
}

.grid .right {
  text-align: right;
}

.grid .center {
  text-align: center;
  padding-left: 0;
  padding-right: 0;
}

.grid .inset {
  padding-right: 14px;
}

.grid td.indent {
  padding-left: 18px;
}

.grid .red {
  color: #f00d0d;
}

.grid td.serif {
  font-family: "Liberation Serif", serif;
  font-size: 30px;
}

.grid td.thin {
  font-weight: 400;
}

.grid td.arial {
  font-family: "Liberation Sans", sans-serif;
}

.grid td.ruled:not(.gutter) {
  padding-bottom: 1px;
  border-bottom: 2px solid #222;
}

.grid td.total {
  padding-bottom: 0;
  line-height: 28px;
  border-bottom: 4px double #222;
}

.accounting {
  display: flex;
  justify-content: space-between;
  padding: 0 8px 0 6px;
}

.error::before {
  content: "";
  position: absolute;
  left: 0;
  top: 0;
  width: 10px;
  height: 10px;
  background: #1d7330;
  clip-path: polygon(0 0, 100% 0, 0 100%);
}

.vscroll {
  width: 8px;
  margin-top: 20px;
  background: #e4e4e4;
  border-left: 1px solid #bbb;
}

.vscroll button {
  width: 100%;
  height: 22px;
  background: #fff;
  border-top: 1px solid #bbb;
  border-bottom: 1px solid #bbb;
}

.vscroll button svg {
  width: 7px;
  height: 8px;
}

.vscroll i {
  display: block;
  height: 63px;
  background: #fff;
  border-bottom: 1px solid #bbb;
}

.pointer {
  position: absolute;
  left: 1959px;
  top: 283px;
  width: 20px;
  height: 20px;
}
</style>
